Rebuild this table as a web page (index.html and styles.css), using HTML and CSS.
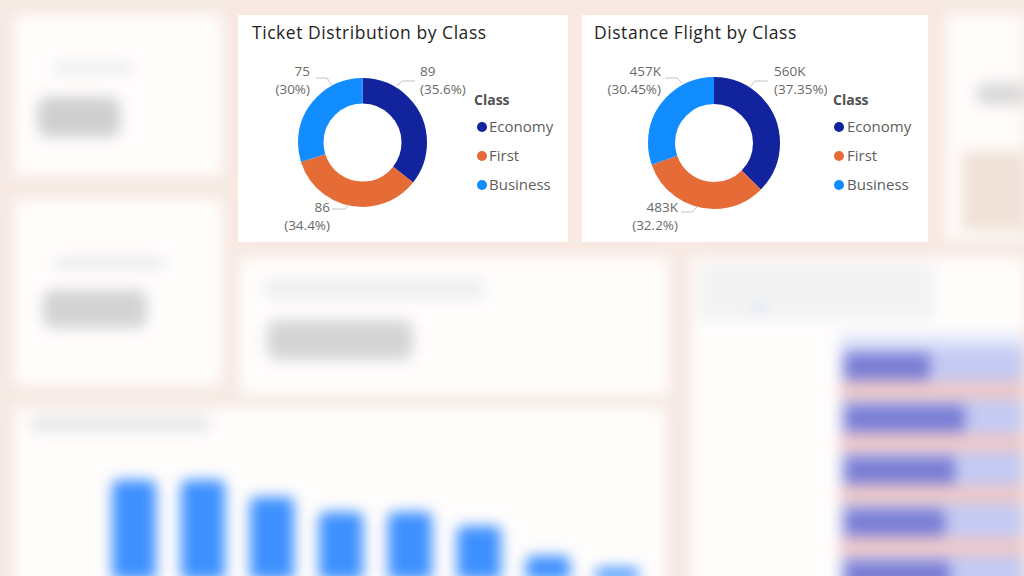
FILE: index.html
```html
<!DOCTYPE html>
<html lang="en">
<head>
<meta charset="utf-8">
<title>Airline Dashboard</title>
<link rel="stylesheet" href="styles.css">
</head>
<body>
<div class="page">
  <div class="kpis">
    <div class="bcard kpi-a blur">
      <div class="ghost-title gt-a"></div>
      <div class="ghost-num gn-a"></div>
    </div>
    <div class="bcard kpi-b blur">
      <div class="ghost-title gt-b"></div>
      <div class="ghost-num gn-b"></div>
    </div>
  </div>

  <div class="sharp">
    <div class="card card1">
      <div class="card-title">Ticket Distribution by Class</div>
      <div class="chart-row">
        <svg class="donut d1" width="230" height="190" viewBox="0 0 230 190">
          <g transform="translate(124.5 98.5) rotate(-90)">
            <circle r="51.75" fill="none" stroke="#12239E" stroke-width="25.5" stroke-dasharray="115.75 600"/>
            <circle r="51.75" fill="none" stroke="#E66C37" stroke-width="25.5" stroke-dasharray="111.85 600" stroke-dashoffset="-115.75"/>
            <circle r="51.75" fill="none" stroke="#118DFF" stroke-width="25.5" stroke-dasharray="97.55 600" stroke-dashoffset="-227.6"/>
          </g>
          <polyline class="leader" points="159,42 164,37 177,37"/>
          <polyline class="leader" points="78,34 89,34 94,41"/>
          <polyline class="leader" points="94,165 107,165 112,160"/>
          <text class="lbl" x="182" y="32">89</text>
          <text class="lbl" x="182" y="50">(35.6%)</text>
          <text class="lbl end" x="72" y="32">75</text>
          <text class="lbl end" x="72" y="50">(30%)</text>
          <text class="lbl end" x="92" y="168">86</text>
          <text class="lbl end" x="92" y="186">(34.4%)</text>
        </svg>
        <div class="legend">
          <div class="legend-title">Class</div>
          <div class="legend-item"><span class="dot eco"></span>Economy</div>
          <div class="legend-item"><span class="dot first"></span>First</div>
          <div class="legend-item"><span class="dot bus"></span>Business</div>
        </div>
      </div>
    </div>

    <div class="card card2">
      <div class="card-title">Distance Flight by Class</div>
      <div class="chart-row">
        <svg class="donut d2" width="245" height="190" viewBox="0 0 245 190">
          <g transform="translate(132 99) rotate(-90)">
            <circle r="52.5" fill="none" stroke="#12239E" stroke-width="27" stroke-dasharray="123.21 600"/>
            <circle r="52.5" fill="none" stroke="#E66C37" stroke-width="27" stroke-dasharray="106.22 600" stroke-dashoffset="-123.21"/>
            <circle r="52.5" fill="none" stroke="#118DFF" stroke-width="27" stroke-dasharray="100.45 600" stroke-dashoffset="-229.43"/>
          </g>
          <polyline class="leader" points="168,43 173,37 186,37"/>
          <polyline class="leader" points="83,34 95,34 100,39"/>
          <polyline class="leader" points="99,168 110,168 116,162"/>
          <text class="lbl" x="192" y="32">560K</text>
          <text class="lbl" x="192" y="50">(37.35%)</text>
          <text class="lbl end" x="79" y="32">457K</text>
          <text class="lbl end" x="79" y="50">(30.45%)</text>
          <text class="lbl end" x="96" y="168">483K</text>
          <text class="lbl end" x="96" y="186">(32.2%)</text>
        </svg>
        <div class="legend">
          <div class="legend-title">Class</div>
          <div class="legend-item"><span class="dot eco"></span>Economy</div>
          <div class="legend-item"><span class="dot first"></span>First</div>
          <div class="legend-item"><span class="dot bus"></span>Business</div>
        </div>
      </div>
    </div>
  </div>

  <div class="side blur">
    <div class="side-card">
      <div class="side-blob"></div>
      <div class="side-block"></div>
    </div>
  </div>

  <div class="mid">
    <div class="bcard midcard blur">
      <div class="ghost-title gt-m"></div>
      <div class="ghost-num gn-m"></div>
    </div>
  </div>

  <div class="right">
    <div class="bcard rcard blur">
      <div class="r-head"><span class="r-dot"></span></div>
      <div class="r-bars">
        <div class="r-fade"></div>
        <div class="r-row"><div class="r-top"><div class="r-bar" style="width:85px"></div></div><div class="r-bot"></div></div>
        <div class="r-row"><div class="r-top"><div class="r-bar" style="width:120px"></div></div><div class="r-bot"></div></div>
        <div class="r-row"><div class="r-top"><div class="r-bar" style="width:110px"></div></div><div class="r-bot"></div></div>
        <div class="r-row"><div class="r-top"><div class="r-bar" style="width:100px"></div></div><div class="r-bot"></div></div>
        <div class="r-row"><div class="r-top"><div class="r-bar" style="width:105px"></div></div><div class="r-bot"></div></div>
      </div>
    </div>
  </div>

  <div class="bottom">
    <div class="bcard barcard blur">
      <div class="ghost-title gt-bars"></div>
      <div class="vbars">
        <div class="vbar" style="height:100px"></div>
        <div class="vbar" style="height:100px"></div>
        <div class="vbar" style="height:83px"></div>
        <div class="vbar" style="height:68px"></div>
        <div class="vbar" style="height:68px"></div>
        <div class="vbar" style="height:54px"></div>
        <div class="vbar" style="height:24px"></div>
        <div class="vbar" style="height:12px"></div>
      </div>
    </div>
  </div>
</div>
</body>
</html>
```

FILE: styles.css
```css
* { box-sizing: border-box; }

html, body {
  margin: 0;
  padding: 0;
  background: #f7eae4;
}

body {
  font-family: "Open Sans", "Noto Sans", sans-serif;
}

.page {
  width: 1024px;
  height: 576px;
  overflow: hidden;
  background: #f7eae4;
  display: grid;
  grid-template-columns: 228px 452px 260px 84px;
  grid-template-rows: 250px 155px 171px;
  grid-template-areas:
    "kpis sharp sharp side"
    "kpis mid right right"
    "bottom bottom right right";
}

.blur { filter: blur(7px); }

.bcard { background: #fffdfc; }

/* left KPI column */
.kpis {
  grid-area: kpis;
  display: flex;
  flex-direction: column;
  gap: 25px;
  padding: 15px 6px 20px 15px;
}

.kpi-a { height: 160px; padding: 48px 0 0 23px; }
.kpi-b { flex: 1; padding: 57px 0 0 28px; }

.ghost-title { background: #ebebeb; border-radius: 5px; }
.ghost-num { background: #cfcfcf; border-radius: 9px; }

.gt-a { width: 80px; height: 10px; margin-left: 15px; }
.gn-a { width: 82px; height: 40px; margin-top: 24px; }
.gt-b { width: 110px; height: 12px; margin-left: 12px; }
.gn-b { width: 104px; height: 38px; margin-top: 21px; background: #d3d3d3; }

/* sharp donut cards */
.sharp {
  grid-area: sharp;
  display: flex;
  gap: 14px;
  padding: 15px 12px 0 10px;
  background: #f8e9e2;
}

.card {
  background: #ffffff;
  height: 227px;
  display: flex;
  flex-direction: column;
}

.card1 { width: 330px; }
.card2 { width: 346px; }

.card-title {
  font-size: 17.5px;
  font-weight: 500;
  line-height: 24px;
  color: #252423;
  padding: 5px 0 0 14px;
  letter-spacing: 0.55px;
  white-space: nowrap;
}
.card2 .card-title { padding-left: 12px; }

.chart-row {
  display: flex;
  height: 190px;
}

.donut { display: block; flex: none; }

.leader {
  fill: none;
  stroke: #c2c2c2;
  stroke-width: 1;
}

.lbl {
  font-family: "Open Sans", "Noto Sans", sans-serif;
  font-size: 13.5px;
  fill: #6b6967;
}
.lbl.end { text-anchor: end; }

.legend {
  padding: 46px 0 0 6px;
  display: flex;
  flex-direction: column;
}

.legend-title {
  font-size: 14px;
  font-weight: 700;
  line-height: 20px;
  color: #525150;
  margin-bottom: 2px;
}

.legend-item {
  display: flex;
  align-items: center;
  gap: 2px;
  font-size: 15px;
  line-height: 29px;
  color: #605e5c;
  padding-left: 3px;
  white-space: nowrap;
}
.card2 .legend-item { padding-left: 1px; gap: 3px; }

.dot {
  width: 10px;
  height: 10px;
  border-radius: 50%;
  flex: none;
}
.dot.eco { background: #12239e; }
.dot.first { background: #e66c37; }
.dot.bus { background: #118dff; }

/* right side blurred strip */
.side {
  grid-area: side;
  padding: 15px 0 10px 6px;
}
.side-card {
  height: 100%;
  background: #fffcfb;
  padding: 68px 0 0 30px;
}
.side-blob {
  height: 22px;
  background: #d9d9d9;
  border-radius: 10px 0 0 10px;
}
.side-block {
  height: 80px;
  margin: 46px 0 0 -14px;
  background: #f0e2d8;
}

/* middle blurred card */
.mid {
  grid-area: mid;
  padding: 8px 12px 10px 12px;
}
.midcard { height: 100%; padding-top: 20px; }
.gt-m { width: 220px; height: 22px; margin-left: 25px; background: #f0f0f0; }
.gn-m { width: 146px; height: 40px; margin: 20px 0 0 27px; background: #d5d5d5; }

/* right blurred bar card */
.right {
  grid-area: right;
  padding: 8px 0 0 12px;
}
.rcard { height: 360px; padding: 6px 0 0 8px; }
.r-head {
  width: 235px;
  height: 56px;
  background: #f3f3f3;
  padding: 36px 0 0 52px;
}
.r-dot {
  display: block;
  width: 14px;
  height: 12px;
  border-radius: 6px;
  background: #dfe5fb;
}
.r-bars { margin: 14px 0 0 140px; }
.r-fade { height: 14px; background: #e2e6fb; }
.r-row { display: flex; flex-direction: column; height: 52px; }
.r-top { height: 33px; background: #c4caf3; padding-top: 5px; }
.r-bar { height: 27px; margin-left: 5px; background: #7a7ed5; border-radius: 4px; }
.r-bot { flex: 1; background: #edc8c9; }

/* bottom blurred column chart */
.bottom {
  grid-area: bottom;
  padding: 3px 15px 0 15px;
}
.barcard {
  height: 200px;
  padding: 8px 0 0 15px;
  display: flex;
  flex-direction: column;
}
.gt-bars { width: 180px; height: 16px; background: #e8e8e8; }
.vbars {
  flex: none;
  height: 142px;
  display: flex;
  align-items: flex-end;
  gap: 25px;
  padding-left: 82px;
}
.vbar {
  width: 44px;
  background: #3d90ff;
  border-radius: 6px 6px 0 0;
  margin-bottom: -6px;
}
```
